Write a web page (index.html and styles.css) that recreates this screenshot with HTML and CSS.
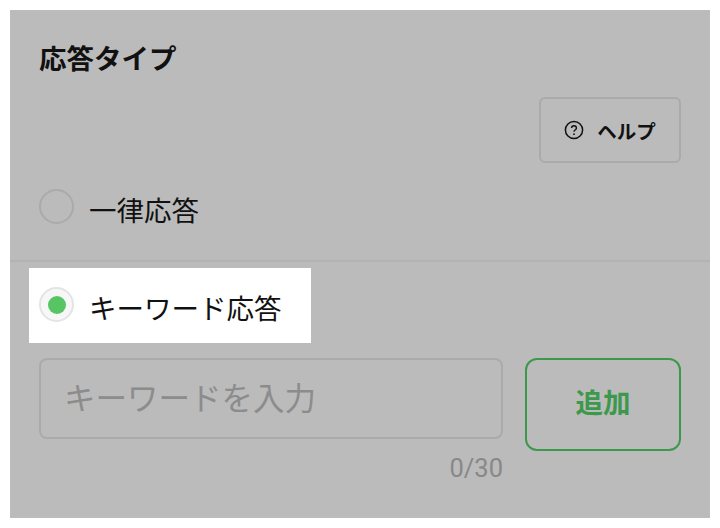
FILE: index.html
```html
<!DOCTYPE html>
<html lang="ja">
<head>
    <meta charset="UTF-8">
    <title>応答タイプ</title>
    <link rel="stylesheet" href="styles.css">
</head>
<body>
    <div class="panel">
        <div class="title">応答タイプ</div>
        <div class="help-row">
            <button class="help-button">
                <svg class="help-icon" viewBox="0 0 20 20" width="20" height="20">
                    <circle cx="10" cy="10" r="8.6" fill="none" stroke="#111" stroke-width="1.5"/>
                    <path d="M7.6 8.1c0-1.4 1-2.3 2.4-2.3s2.4.9 2.4 2.2c0 1-.5 1.5-1.3 2-.8.5-1.1.9-1.1 1.7" fill="none" stroke="#111" stroke-width="1.4"/>
                    <circle cx="10" cy="14.2" r="0.9" fill="#111"/>
                </svg>
                <span>ヘルプ</span>
            </button>
        </div>
        <div class="radio-row plain">
            <span class="radio"></span>
            <span class="radio-label">一律応答</span>
        </div>
        <div class="divider"></div>
        <div class="radio-row selected">
            <span class="radio"><span class="radio-dot"></span></span>
            <span class="radio-label">キーワード応答</span>
        </div>
        <div class="keyword-row">
            <div class="keyword-field">
                <div class="keyword-input">キーワードを入力</div>
                <div class="counter">0/30</div>
            </div>
            <button class="add-button">追加</button>
        </div>
    </div>
</body>
</html>
```

FILE: styles.css
```css
* {
    box-sizing: border-box;
}
body {
    margin: 0;
    padding: 10px;
    background-color: white;
    font-family: "Noto Sans CJK JP", "Liberation Sans", sans-serif;
    color: #111;
}
.panel {
    width: 700px;
    height: 508px;
    padding: 0 29px;
    background-color: #bbbbbb;
    overflow: hidden;
}
.title {
    margin-top: 28px;
    height: 40px;
    line-height: 38px;
    font-size: 27.5px;
    font-weight: 700;
}
.help-row {
    display: flex;
    justify-content: flex-end;
    margin-top: 19px;
}
.help-button {
    display: flex;
    align-items: center;
    justify-content: center;
    gap: 13px;
    width: 142px;
    height: 66px;
    padding: 0;
    background: transparent;
    border: 2px solid #aaaaaa;
    border-radius: 6px;
    font-family: inherit;
    font-size: 19.5px;
    font-weight: 700;
    color: #111;
}
.radio-row {
    display: flex;
    align-items: center;
    gap: 15px;
    font-size: 27.5px;
}
.radio-label {
    padding-top: 5px;
}
.radio-row.plain {
    height: 35px;
    margin-top: 26px;
}
.radio-row.selected {
    width: 282px;
    height: 75px;
    margin-top: 6px;
    margin-left: -10px;
    padding-left: 10px;
    padding-bottom: 2px;
    background-color: white;
}
.radio {
    display: flex;
    align-items: center;
    justify-content: center;
    width: 35px;
    height: 35px;
    border: 2px solid #aaaaaa;
    border-radius: 50%;
    flex-shrink: 0;
}
.selected .radio {
    border-color: #e4e4e4;
    background-color: #f7f7f7;
}
.radio-dot {
    width: 18px;
    height: 18px;
    border-radius: 50%;
    background-color: #57c564;
}
.divider {
    height: 2px;
    margin: 36px -29px 0;
    background-color: #b3b3b3;
}
.keyword-row {
    display: flex;
    gap: 22px;
    margin-top: 15px;
}
.keyword-field {
    flex: 1;
}
.keyword-input {
    height: 81px;
    padding-left: 23px;
    line-height: 72px;
    border: 2px solid #aaaaaa;
    border-radius: 8px;
    font-size: 31.5px;
    color: #8c8c8c;
}
.counter {
    margin-top: 14px;
    text-align: right;
    font-family: "Roboto", "Liberation Sans", sans-serif;
    font-size: 25.5px;
    line-height: 30px;
    color: #888888;
}
.add-button {
    width: 156px;
    height: 93px;
    padding: 0 0 8px;
    background: transparent;
    border: 2px solid #3c984b;
    border-radius: 12px;
    font-family: inherit;
    font-size: 27.5px;
    font-weight: 700;
    color: #3c984b;
}
```
